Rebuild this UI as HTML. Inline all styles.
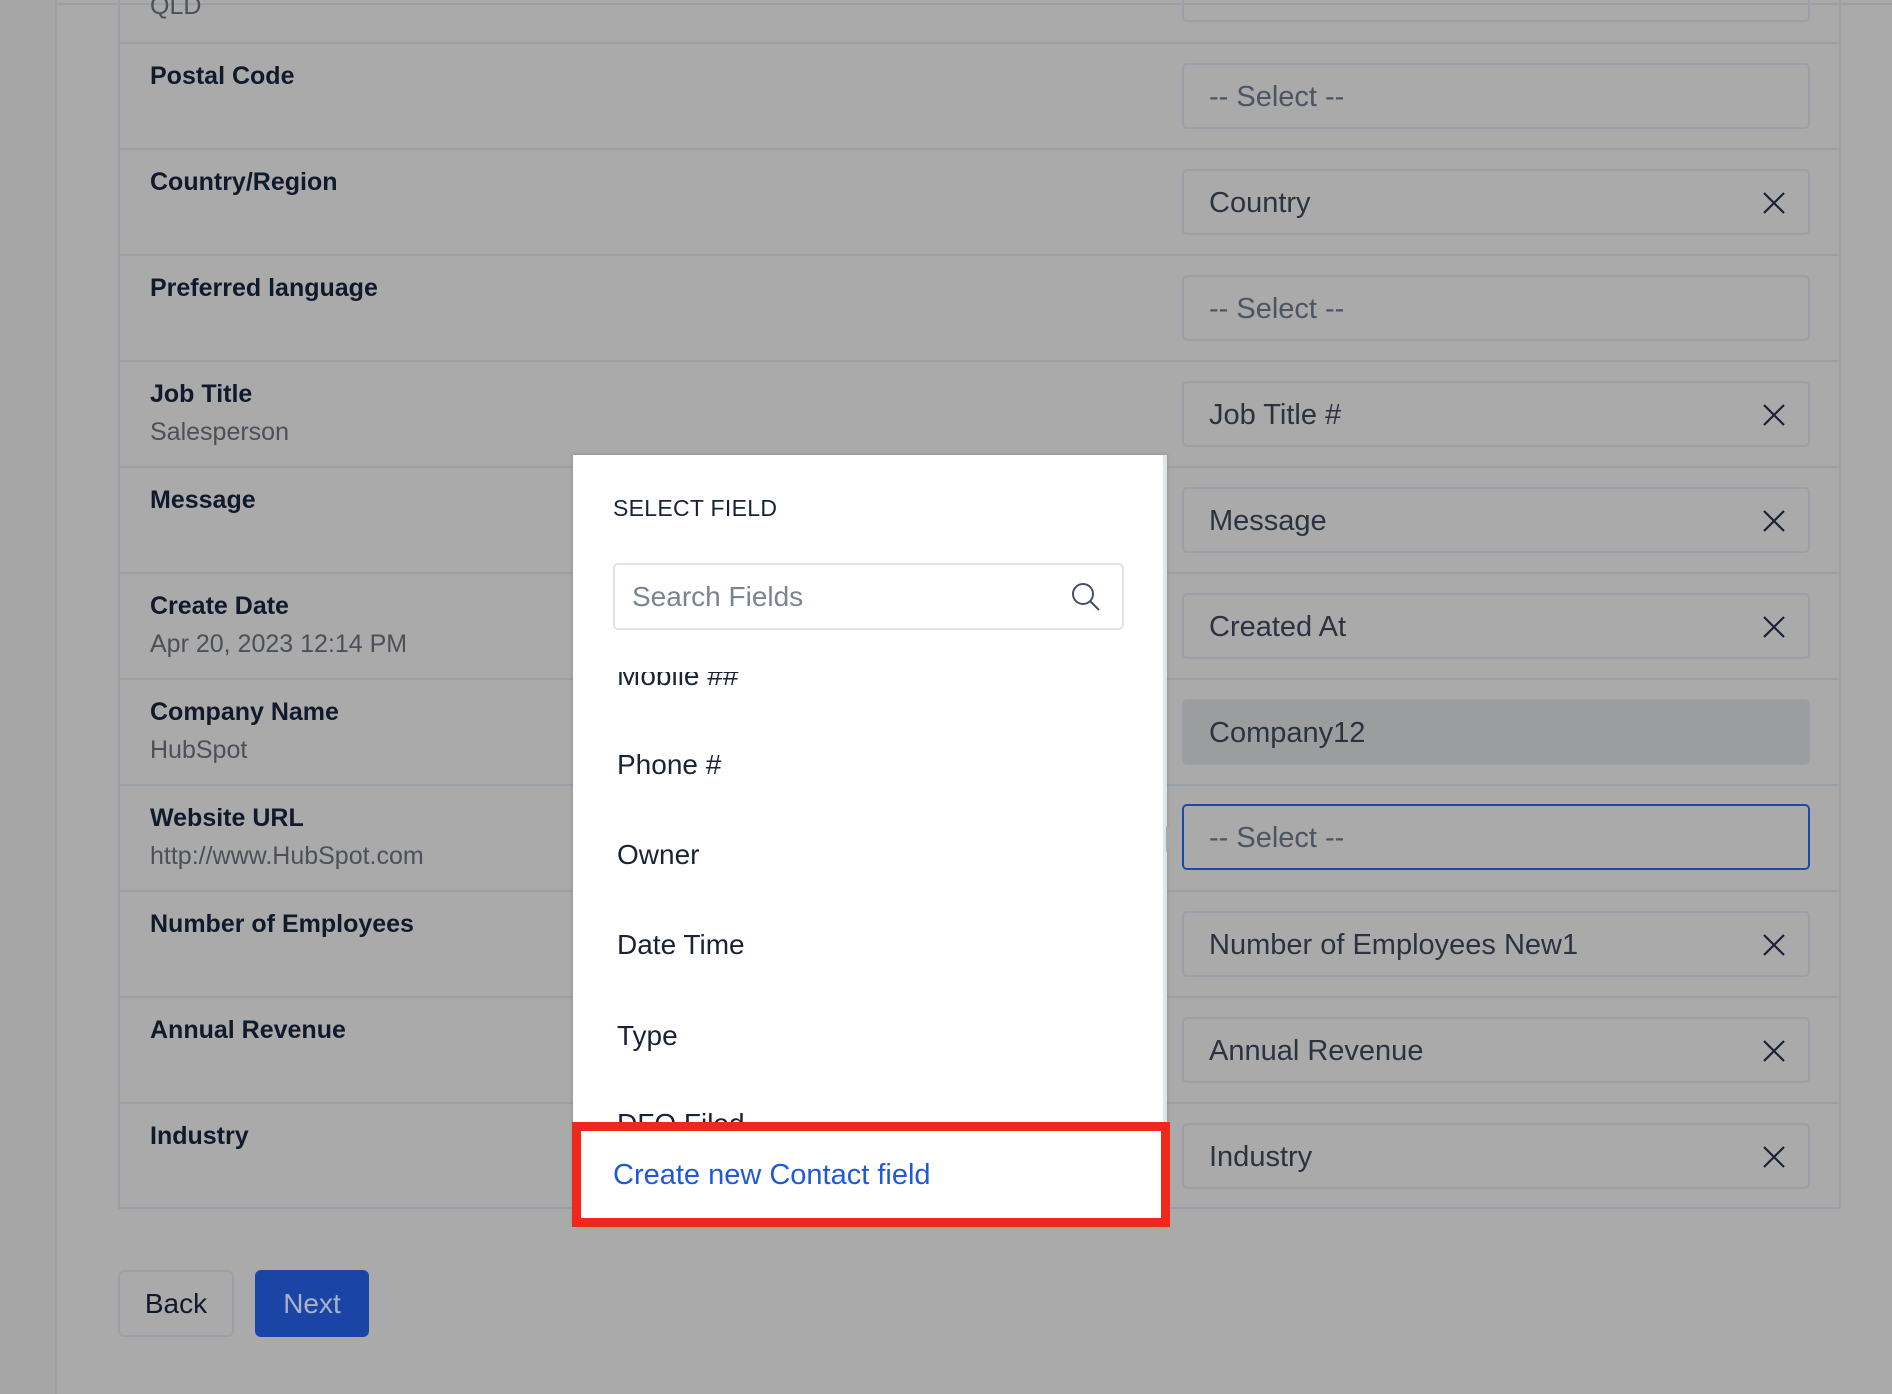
<!DOCTYPE html>
<html><head><meta charset="utf-8"><style>
*{margin:0;padding:0;box-sizing:border-box}
body{width:1892px;height:1394px;overflow:hidden;background:#aaaaaa;font-family:"Liberation Sans",sans-serif;position:relative}
.abs{position:absolute}
.side{left:0;top:0;width:57px;height:1394px;background:#a6a6a6;border-right:2px solid #9fa0a3}
.topl{left:57px;top:3px;width:1835px;height:2px;background:#9c9ea2}
.table{left:118px;top:0;width:1723px;height:1209px;border-left:2px solid #9c9fa5;border-right:2px solid #9c9fa5;border-bottom:2px solid #9c9fa5}
.hl{left:118px;width:1723px;height:2px;background:#9c9fa5}
.lab{left:150px;font-weight:bold;font-size:25px;color:#111a2c}
.sub{left:150px;font-size:25px;color:#4b5059}
.inp{left:1182px;width:628px;height:66px;border:2px solid #9c9fa5;border-radius:5px;font-size:29px;color:#2c3340;padding-left:25px;line-height:64px}
.x{position:absolute;right:22px;top:20px;width:24px;height:24px}
.pop{left:573px;top:455px;width:594px;height:770px;background:#fff;border-right:4px solid #dfe4ea;box-shadow:0 0 4px rgba(0,0,0,.2)}
.item{position:absolute;left:44px;font-size:28px;color:#1a2235}
</style></head><body>
<div class="abs side"></div>
<div class="abs topl"></div>
<div class="abs table"></div>
<div class="abs hl" style="top:42px"></div>
<div class="abs hl" style="top:148px"></div>
<div class="abs hl" style="top:254px"></div>
<div class="abs hl" style="top:360px"></div>
<div class="abs hl" style="top:466px"></div>
<div class="abs hl" style="top:572px"></div>
<div class="abs hl" style="top:678px"></div>
<div class="abs hl" style="top:784px"></div>
<div class="abs hl" style="top:890px"></div>
<div class="abs hl" style="top:996px"></div>
<div class="abs hl" style="top:1102px"></div>

<div class="abs sub" style="top:-8px">QLD</div>
<div class="abs inp" style="top:-44px"></div>

<div class="abs lab" style="top:62px">Postal Code</div>
<div class="abs lab" style="top:168px">Country/Region</div>
<div class="abs lab" style="top:274px">Preferred language</div>
<div class="abs lab" style="top:380px">Job Title</div>
<div class="abs sub" style="top:418px">Salesperson</div>
<div class="abs lab" style="top:486px">Message</div>
<div class="abs lab" style="top:592px">Create Date</div>
<div class="abs sub" style="top:630px">Apr 20, 2023 12:14 PM</div>
<div class="abs lab" style="top:698px">Company Name</div>
<div class="abs sub" style="top:736px">HubSpot</div>
<div class="abs lab" style="top:804px">Website URL</div>
<div class="abs sub" style="top:842px">http://www.HubSpot.com</div>
<div class="abs lab" style="top:910px">Number of Employees</div>
<div class="abs lab" style="top:1016px">Annual Revenue</div>
<div class="abs lab" style="top:1122px">Industry</div>

<svg width="0" height="0" style="position:absolute"><defs><g id="xx"><path d="M2 2L22 22M22 2L2 22" stroke="#1a2235" stroke-width="2.2" fill="none"/></g></defs></svg>

<div class="abs inp" style="top:63px;color:#4d5563">-- Select --</div>
<div class="abs inp" style="top:169px">Country<svg class="x"><use href="#xx"/></svg></div>
<div class="abs inp" style="top:275px;color:#4d5563">-- Select --</div>
<div class="abs inp" style="top:381px">Job Title #<svg class="x"><use href="#xx"/></svg></div>
<div class="abs inp" style="top:487px">Message<svg class="x"><use href="#xx"/></svg></div>
<div class="abs inp" style="top:593px">Created At<svg class="x"><use href="#xx"/></svg></div>
<div class="abs inp" style="top:699px;background:#9c9d9f">Company12</div>
<div class="abs inp" style="top:804px;border-color:#1d48ad;color:#4d5563">-- Select --</div>
<div class="abs inp" style="top:911px">Number of Employees New1<svg class="x"><use href="#xx"/></svg></div>
<div class="abs inp" style="top:1017px">Annual Revenue<svg class="x"><use href="#xx"/></svg></div>
<div class="abs inp" style="top:1123px">Industry<svg class="x"><use href="#xx"/></svg></div>

<div class="abs" style="left:118px;top:1270px;width:116px;height:67px;border:2px solid #9c9fa5;border-radius:6px;font-size:28px;color:#111a2c;text-align:center;line-height:63px">Back</div>
<div class="abs" style="left:255px;top:1270px;width:114px;height:67px;background:#1a45a6;border-radius:6px;font-size:28px;color:#a9b3c6;text-align:center;line-height:67px">Next</div>

<div class="abs pop">
  <div class="abs" style="left:40px;top:40px;font-size:23px;color:#18223a;letter-spacing:.3px">SELECT FIELD</div>
  <div class="abs" style="left:0;top:217px;width:590px;height:450px;overflow:hidden">
    <div class="item" style="top:-12px">Mobile ##</div>
    <div class="item" style="top:77px">Phone #</div>
    <div class="item" style="top:167px">Owner</div>
    <div class="item" style="top:257px">Date Time</div>
    <div class="item" style="top:348px">Type</div>
    <div class="item" style="top:436px">DFO Filed</div>
  </div>
  <div class="abs" style="left:40px;top:108px;width:511px;height:67px;border:2px solid #dfe3e8;border-radius:5px;background:#fff;font-size:28px;color:#7a8494;padding-left:17px;line-height:63px">Search Fields
    <svg class="abs" style="right:20px;top:16px" width="32" height="32"><circle cx="13" cy="13" r="10" stroke="#44506a" stroke-width="2" fill="none"/><path d="M20 20L29 29" stroke="#44506a" stroke-width="2"/></svg>
  </div>
</div>
<svg class="abs" style="left:1166px;top:826px" width="14" height="26"><path d="M0 0L12 13L0 26Z" fill="#a8a9ab"/></svg>

<div class="abs" style="left:572px;top:1122px;width:598px;height:105px;border:9px solid #f0271b;background:#fff">
  <div class="abs" style="left:32px;top:28px;font-size:29px;color:#1f5ad6">Create new Contact field</div>
</div>
</body></html>
